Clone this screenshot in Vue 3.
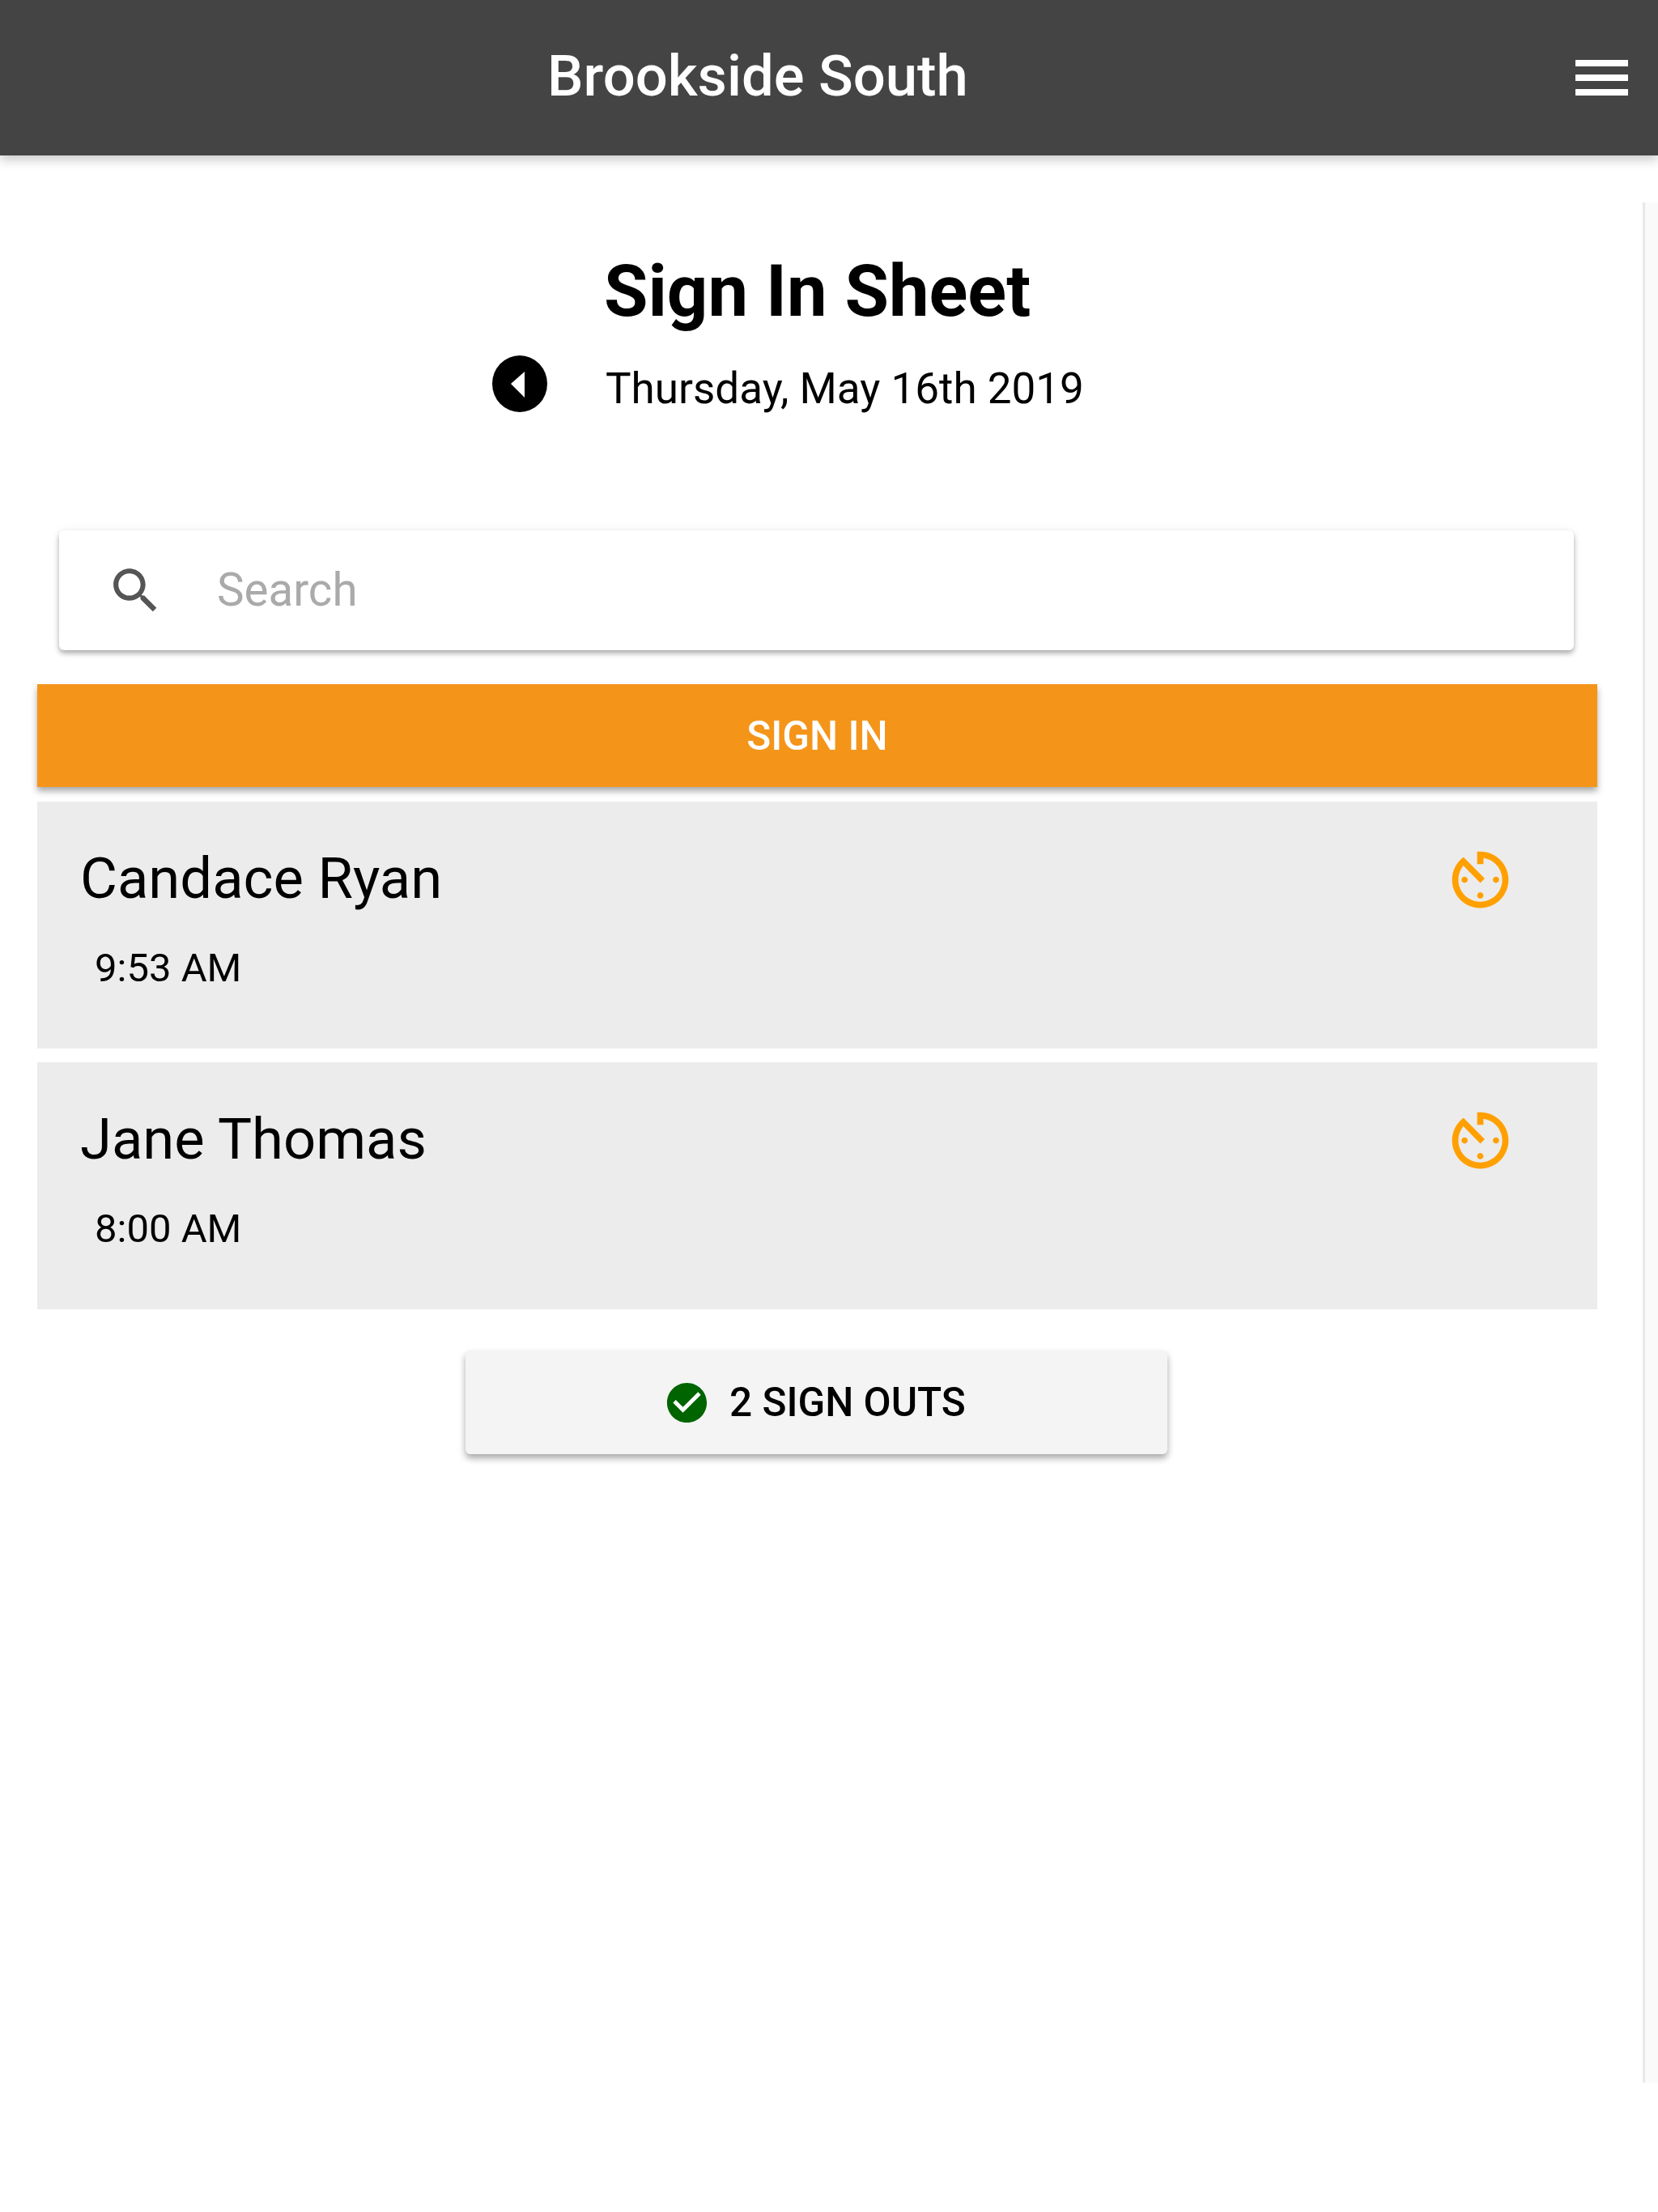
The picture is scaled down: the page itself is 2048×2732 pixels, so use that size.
<template>
  <div class="page">
    <header class="top-bar">
      <span class="site-name">Brookside South</span>
      <button class="menu-btn" aria-label="Menu">
        <span></span>
        <span></span>
        <span></span>
      </button>
    </header>

    <div class="body-wrap">
      <main class="content">
        <h1 class="sheet-title">Sign In Sheet</h1>
        <div class="date-row">
          <svg class="back-icon" viewBox="0 0 68 70">
            <ellipse cx="34" cy="35" rx="34" ry="35" fill="#000" />
            <polygon points="23,35 40,20 40,52" fill="#fff" />
          </svg>
          <span class="date-text">Thursday, May 16th 2019</span>
        </div>

        <div class="search-box">
          <svg class="search-icon" viewBox="0 0 24 24">
            <path fill="#555" d="M15.5 14h-.79l-.28-.27C15.41 12.59 16 11.11 16 9.5 16 5.91 13.09 3 9.5 3S3 5.91 3 9.5 5.91 16 9.5 16c1.61 0 3.09-.59 4.23-1.57l.27.28v.79l5 4.99L20.49 19l-4.99-5zm-6 0C7.01 14 5 11.99 5 9.5S7.01 5 9.5 5 14 7.01 14 9.5 11.99 14 9.5 14z" />
          </svg>
          <span class="search-placeholder">Search</span>
        </div>

        <button class="sign-in-btn">SIGN IN</button>

        <div v-for="person in people" :key="person.name" class="person-row">
          <div class="person-info">
            <div class="person-name">{{ person.name }}</div>
            <div class="person-time">{{ person.time }}</div>
          </div>
          <svg class="timer-icon" viewBox="0 0 24 24">
            <path fill="#ffa000" d="M11 17c0 .55.45 1 1 1s1-.45 1-1-.45-1-1-1-1 .45-1 1zm0-14v4h2V5.08c3.39.49 6 3.39 6 6.92 0 3.87-3.13 7-7 7s-7-3.13-7-7c0-1.68.59-3.22 1.58-4.5L12 13l1.41-1.41-6.8-6.8v.02C4.42 6.45 3 9.05 3 12c0 4.97 4.02 9 9 9 4.97 0 9-4.03 9-9s-4.03-9-9-9h-1zm7 9c0-.55-.45-1-1-1s-1 .45-1 1 .45 1 1 1 1-.45 1-1zM6 12c0 .55.45 1 1 1s1-.45 1-1-.45-1-1-1-1 .45-1 1z" />
          </svg>
        </div>

        <button class="sign-outs-btn">
          <svg class="check-icon" viewBox="0 0 24 24">
            <circle cx="12" cy="12" r="8" fill="#fff" />
            <path fill="#006400" d="M12 2C6.48 2 2 6.48 2 12s4.48 10 10 10 10-4.48 10-10S17.52 2 12 2zm-2 15l-5-5 1.41-1.41L10 14.17l7.59-7.59L19 8l-9 9z" />
          </svg>
          <span>2 SIGN OUTS</span>
        </button>
      </main>
      <div class="scroll-track"></div>
    </div>
  </div>
</template>

<script setup>
const people = [
  { name: 'Candace Ryan', time: '9:53 AM' },
  { name: 'Jane Thomas', time: '8:00 AM' }
]
</script>

<style scoped>
.page {
  width: 2048px;
  height: 2732px;
  background: #fff;
  font-family: Roboto, "Liberation Sans", sans-serif;
  color: #000;
  overflow: hidden;
}

.top-bar {
  position: relative;
  z-index: 1;
  display: flex;
  align-items: center;
  justify-content: space-between;
  box-sizing: border-box;
  height: 192px;
  padding: 0 37px 0 676px;
  background: #444;
  box-shadow: 0 6px 12px rgba(0, 0, 0, 0.2);
}

.site-name {
  margin-top: -3px;
  color: #fff;
  font-size: 70.6px;
  font-weight: 500;
  line-height: 1;
}

.menu-btn {
  display: flex;
  flex-direction: column;
  gap: 10px;
  padding: 0;
  border: 0;
  background: none;
}

.menu-btn span {
  display: block;
  width: 65px;
  height: 8px;
  background: #fff;
}

.body-wrap {
  display: flex;
  align-items: flex-start;
}

.content {
  flex: 1;
  box-sizing: border-box;
  padding: 0 56px 0 46px;
}

.scroll-track {
  flex: none;
  box-sizing: border-box;
  width: 19px;
  height: 2322px;
  margin-top: 58px;
  background: #fafafa;
  border-left: 3px solid #e8e8e8;
}

.sheet-title {
  margin: 118px 0 0;
  font-size: 88.5px;
  font-weight: 700;
  line-height: 100px;
  text-align: center;
}

.date-row {
  display: flex;
  align-items: center;
  height: 72px;
  margin-top: 28px;
  padding-left: 562px;
}

.back-icon {
  flex: none;
  width: 68px;
  height: 70px;
}

.date-text {
  margin: 12px 0 0 72px;
  font-size: 53px;
  line-height: 72px;
}

.search-box {
  display: flex;
  align-items: center;
  height: 148px;
  margin: 145px 29px 0 27px;
  padding-left: 58px;
  background: #fff;
  border-radius: 6px;
  box-shadow: 0 4px 6px rgba(0, 0, 0, 0.3), 0 0 14px rgba(0, 0, 0, 0.05);
}

.search-icon {
  flex: none;
  width: 73px;
  height: 73px;
}

.search-placeholder {
  margin-left: 64px;
  color: #aaa;
  font-size: 56.5px;
}

.sign-in-btn {
  display: block;
  width: 100%;
  height: 127px;
  margin-top: 42px;
  padding: 0;
  border: 0;
  background: #f4951a;
  color: #fff;
  font-family: inherit;
  font-size: 49.5px;
  font-weight: 500;
  box-shadow: 0 5px 8px rgba(0, 0, 0, 0.35);
}

.person-row {
  display: flex;
  justify-content: space-between;
  box-sizing: border-box;
  height: 305px;
  margin-top: 18px;
  padding: 52px 98px 0 53px;
  background: #ececec;
}

.person-row + .person-row {
  margin-top: 17px;
}

.person-name {
  font-size: 70.6px;
  line-height: 86px;
}

.person-time {
  margin-top: 38px;
  padding-left: 18px;
  font-size: 49px;
  line-height: 60px;
}

.timer-icon {
  flex: none;
  width: 93px;
  height: 93px;
  margin-top: -2px;
}

.sign-outs-btn {
  display: flex;
  align-items: center;
  box-sizing: border-box;
  width: 867px;
  height: 128px;
  margin: 51px 0 0 529px;
  padding: 0 0 0 244px;
  border: 0;
  border-radius: 6px;
  background: #f4f4f4;
  color: #000;
  font-family: inherit;
  font-size: 49.5px;
  font-weight: 500;
  box-shadow: 0 5px 8px rgba(0, 0, 0, 0.35);
}

.check-icon {
  flex: none;
  width: 59px;
  height: 59px;
  margin-right: 23px;
}
</style>
